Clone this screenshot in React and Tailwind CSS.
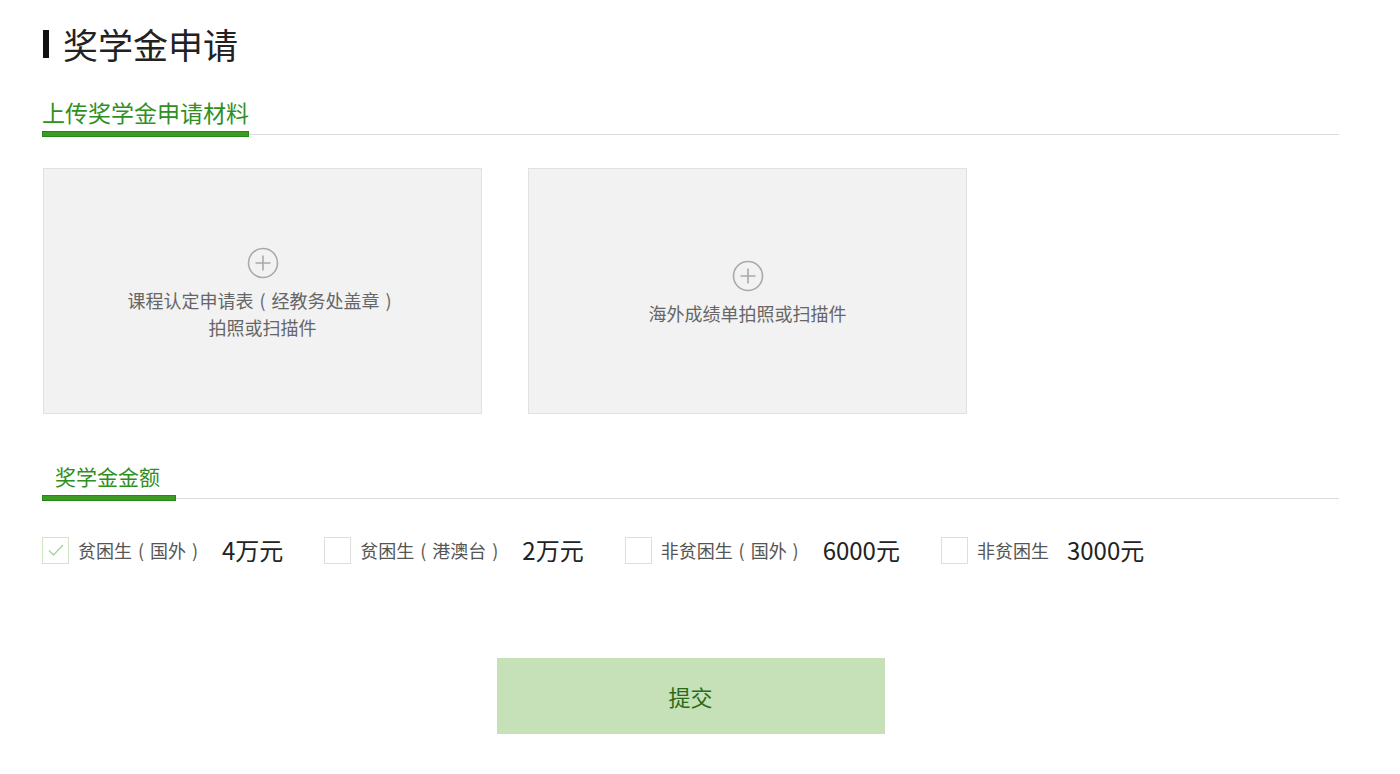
import React, { useState } from 'react';

const options = [
    { label: '贫困生（国外）', amount: '4万元' },
    { label: '贫困生（港澳台）', amount: '2万元' },
    { label: '非贫困生（国外）', amount: '6000元' },
    { label: '非贫困生', amount: '3000元' },
];

// 全角括号单独占一个字宽，居中显示
const Wide = ({ text }) =>
    text.split(/([（）])/).map((part, i) =>
        part === '（' || part === '）' ? (
            <span key={i} className="inline-block w-[1em] text-center">{part === '（' ? '(' : ')'}</span>
        ) : (
            <span key={i}>{part}</span>
        )
    );

const PlusCircle = () => (
    <svg width="32" height="32" viewBox="0 0 32 32" fill="none">
        <circle cx="16" cy="16" r="14.5" stroke="#a9a9a9" strokeWidth="1.6" />
        <path d="M16 8.5V23.5M8.5 16H23.5" stroke="#a9a9a9" strokeWidth="1.6" />
    </svg>
);

const TabHeader = ({ title, padded }) => (
    <div className="flex border-b border-[#dcdcdc]">
        <div className="flex flex-col">
            <div className={`h-[30px] leading-[30px] text-[#2f8f1f] ${padded ? 'pl-[13px] pr-[16px] text-[21px]' : 'text-[23px]'}`}>
                {title}
            </div>
            <div className="relative mt-[4px] -mb-[3px] h-[6px] bg-[#3d9a22] border border-[#23881c]" />
        </div>
    </div>
);

const UploadBox = ({ lines }) => (
    <div className="w-[439px] h-[246px] bg-[#f2f2f2] border border-[#e1e1e1] flex flex-col items-center justify-center pt-[5px] cursor-pointer">
        <PlusCircle />
        <div className="mt-[8px] text-center text-[18px] leading-[27px] text-[#666]">
            {lines.map((l, i) => (
                <div key={i}><Wide text={l} /></div>
            ))}
        </div>
    </div>
);

const App = () => {
    const [selected, setSelected] = useState(0);

    return (
        <div
            className="min-h-screen bg-white pl-[42px] pr-[61px]"
            style={{ fontFamily: '"Noto Sans CJK SC", "Noto Sans", sans-serif' }}
        >
            {/* 标题 */}
            <div className="pt-[22px] flex items-center h-[66px]">
                <div className="w-[6px] h-[28px] bg-[#111] ml-[1px]" />
                <h1 className="ml-[14px] text-[35px] leading-[44px] text-[#222]">奖学金申请</h1>
            </div>

            {/* 上传材料 */}
            <div className="mt-[31px]">
                <TabHeader title="上传奖学金申请材料" />
            </div>
            <div className="mt-[33px] flex gap-[46px] ml-[1px]">
                <UploadBox lines={['课程认定申请表（经教务处盖章）', '拍照或扫描件']} />
                <UploadBox lines={['海外成绩单拍照或扫描件']} />
            </div>

            {/* 金额 */}
            <div className="mt-[47px]">
                <TabHeader title="奖学金金额" padded />
            </div>
            <div className="mt-[37px] flex items-center h-[28px] gap-[41px]">
                {options.map((o, i) => (
                    <div key={i} className="flex items-center cursor-pointer" onClick={() => setSelected(i)}>
                        <div
                            className={`w-[27px] h-[27px] border flex items-center justify-center ${selected === i ? 'border-[#cfe6c4]' : 'border-[#dedede]'}`}
                        >
                            {selected === i && (
                                <svg width="18" height="14" viewBox="0 0 18 14" fill="none">
                                    <path d="M2 7.5L6.5 12L16 2" stroke="#a9d39b" strokeWidth="1.3" />
                                </svg>
                            )}
                        </div>
                        <span className="ml-[9px] text-[18px] text-[#555]"><Wide text={o.label} /></span>
                        <span className="ml-[18px] text-[24px] text-[#222]">{o.amount}</span>
                    </div>
                ))}
            </div>

            {/* 提交 */}
            <div className="mt-[94px] flex justify-center">
                <button className="w-[388px] h-[76px] bg-[#c6e0b8] text-[22px] text-[#2b6a18]">提交</button>
            </div>
        </div>
    );
};

export default App;
